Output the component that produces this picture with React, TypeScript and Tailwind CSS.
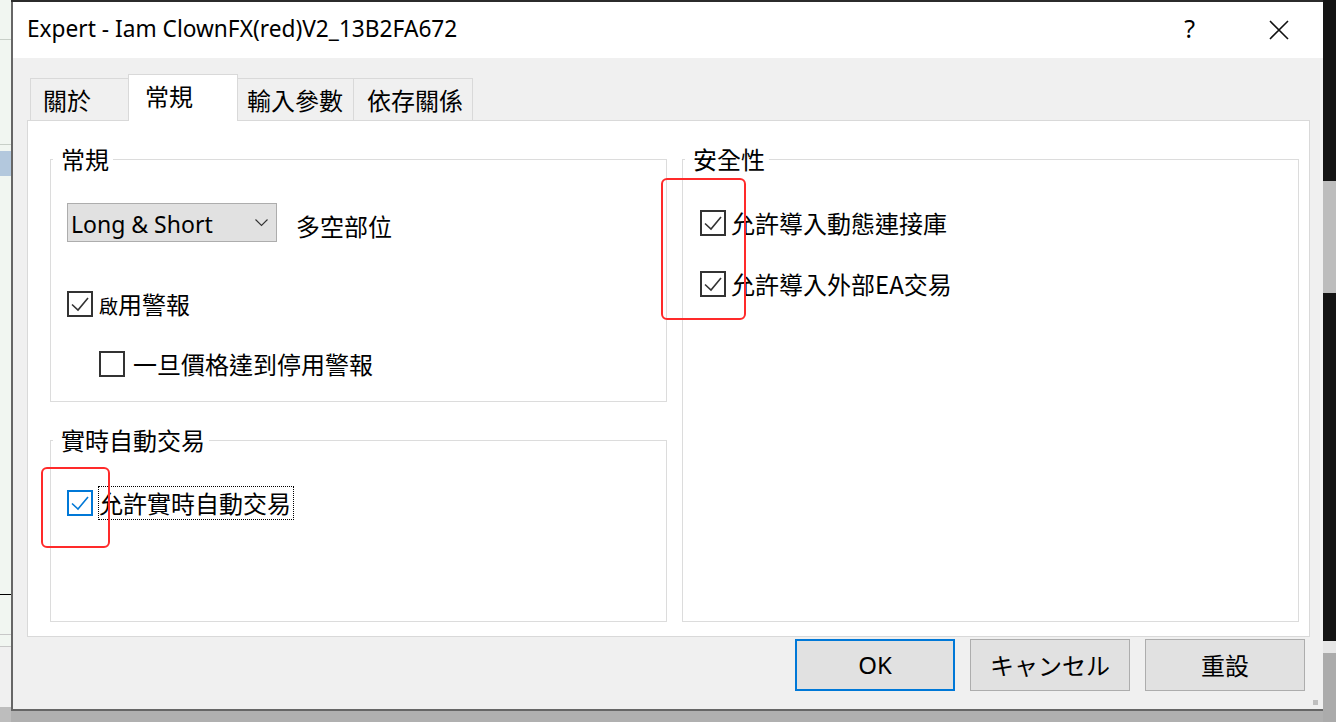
import React from "react";

const latin = { fontFamily: "'Noto Sans', 'Noto Sans CJK TC', sans-serif" };
const cjk = { fontFamily: "'Noto Sans CJK TC', sans-serif" };
const jp = { fontFamily: "'Noto Sans CJK JP', sans-serif" };

function CheckBox({ checked, focused }: { checked: boolean; focused?: boolean }) {
  const color = focused ? "#0078d7" : "#333333";
  return (
    <div
      className={
        "w-[26px] h-[26px] shrink-0 border-2 bg-white " +
        (focused ? "border-[#0078d7]" : "border-[#333333]")
      }
    >
      {checked && (
        <svg width="22" height="22" viewBox="0 0 22 22">
          <polyline
            points="3,11.5 9,17 19,5"
            fill="none"
            stroke={color}
            strokeWidth="1.6"
          />
        </svg>
      )}
    </div>
  );
}

function GroupBox({
  title,
  className,
  children
}: {
  title: string;
  className: string;
  children: React.ReactNode;
}) {
  return (
    <fieldset className={"border border-[#dcdcdc] " + className}>
      <legend
        className="ml-[2px] pl-[8px] pr-[4px] text-[24px] leading-[24px]"
        style={cjk}
      >
        {title}
      </legend>
      {children}
    </fieldset>
  );
}

function Tab({
  label,
  className,
  selected
}: {
  label: string;
  className: string;
  selected?: boolean;
}) {
  return (
    <div
      className={
        "flex items-center border border-[#d9d9d9] border-b-0 text-[24px] " +
        (selected
          ? "bg-white h-[47px] -mb-[1px] relative z-10 pb-[4px]"
          : "bg-[#f0f0f0] h-[42px]") +
        " " +
        className
      }
      style={cjk}
    >
      {label}
    </div>
  );
}

function DialogButton({
  label,
  primary,
  font
}: {
  label: string;
  primary?: boolean;
  font: React.CSSProperties;
}) {
  return (
    <div
      className={
        "w-[160px] h-[52px] flex items-center justify-center bg-[#e1e1e1] text-[24px] " +
        (primary ? "border-2 border-[#0078d7]" : "border border-[#adadad]")
      }
      style={font}
    >
      {label}
    </div>
  );
}

export default function App() {
  return (
    <div className="relative w-[1336px] h-[722px] overflow-hidden flex bg-[#b4b4b4] text-black">
      {/* background app, left side */}
      <div className="w-[11px] h-full flex flex-col bg-[#f1f6f1]">
        <div className="h-[40px] border-b border-[#c8cfc8]" />
        <div className="h-[105px] border-b border-[#c8cfc8]" />
        <div className="h-[6px]" />
        <div className="h-[25px] bg-[#b3c8dd]" />
        <div className="h-[419px] border-b border-black" />
        <div className="h-[40px] border-b border-[#c8c8c8]" />
        <div className="h-[12px] border-b border-[#c8c8c8]" />
        <div className="h-[60px] bg-[#f0f0f0]" />
        <div className="flex-1 bg-[#bdbdbd]" />
      </div>

      {/* dialog column */}
      <div className="w-[1312px] h-full flex flex-col">
        <div className="h-[2px] bg-[#2b2b2b]" />
        <div className="h-[709px] flex flex-col border-l-2 border-b-2 border-[#666666] bg-[#f0f0f0]">
          <div className="h-[56px] bg-white flex items-center pl-[14px] pr-[34px]">
            <div className="text-[22.7px] flex-1 pb-[2px]" style={latin}>
              Expert - Iam ClownFX(red)V2_13B2FA672
            </div>
            <div className="text-[25px] mr-[74px] pb-[2px]" style={latin}>
              ?
            </div>
            <svg width="20" height="20" viewBox="0 0 20 20">
              <path d="M1 1 L19 19 M19 1 L1 19" stroke="#111" strokeWidth="1.6" />
            </svg>
          </div>

          <div className="flex-1 flex flex-col pt-[16px] pl-[14px] pr-[13px] relative">
            <div className="h-[46px] flex items-end pl-[3px]">
              <Tab label="關於" className="w-[98px] pl-[12px] border-r-0" />
              <Tab label="常規" className="w-[110px] pl-[16px]" selected />
              <Tab label="輸入參數" className="w-[116px] pl-[9px] border-l-0" />
              <Tab label="依存關係" className="w-[119px] pl-[13px] border-l-0" />
            </div>

            <div className="h-[517px] bg-white border border-[#d9d9d9] flex gap-[15px] pl-[22px] pt-[26px]">
              <div className="w-[617px] flex flex-col gap-[26px]">
                <GroupBox title="常規" className="h-[255px]">
                  <div className="pl-[16px] pt-[32px] flex flex-col">
                    <div className="flex items-center h-[39px]">
                      <div className="w-[210px] h-[39px] bg-[#e1e1e1] border border-[#adadad] flex items-center pl-[3px] pr-[8px]">
                        <span className="flex-1 h-[37px] flex items-center text-[23px] pt-[3px]" style={latin}>
                          Long &amp; Short
                        </span>
                        <svg width="13" height="8" viewBox="0 0 13 8">
                          <polyline points="0.5,0.5 6.5,6.5 12.5,0.5" fill="none" stroke="#333" strokeWidth="1.1" />
                        </svg>
                      </div>
                      <span className="ml-[19px] h-[39px] flex items-center text-[24px] pt-[7px]" style={cjk}>
                        多空部位
                      </span>
                    </div>
                    <div className="mt-[49px] flex items-center gap-[6px] h-[26px]">
                      <CheckBox checked />
                      <span className="text-[24px] flex items-baseline" style={cjk}>
                        <span className="text-[19px]">啟</span>用警報
                      </span>
                    </div>
                    <div className="mt-[34px] ml-[32px] flex items-center gap-[8px] h-[26px]">
                      <CheckBox checked={false} />
                      <span className="text-[24px]" style={cjk}>
                        一旦價格達到停用警報
                      </span>
                    </div>
                  </div>
                </GroupBox>
                <GroupBox title="實時自動交易" className="h-[194px]">
                  <div className="pl-[16px] pt-[34px] flex items-center h-[68px]">
                    <CheckBox checked focused />
                    <span
                      className="ml-[5px] h-[34px] border border-dotted border-black pl-0 pr-[2px] flex items-center text-[24px]"
                      style={cjk}
                    >
                      允許實時自動交易
                    </span>
                  </div>
                </GroupBox>
              </div>

              <GroupBox title="安全性" className="w-[617px] h-[475px]">
                <div className="pl-[17px] pt-[39px] flex flex-col gap-[35px]">
                  <div className="flex items-center gap-[5px] h-[26px]">
                    <CheckBox checked />
                    <span className="text-[24px]" style={cjk}>
                      允許導入動態連接庫
                    </span>
                  </div>
                  <div className="flex items-center gap-[5px] h-[26px]">
                    <CheckBox checked />
                    <span className="text-[24px]" style={cjk}>
                      允許導入外部EA交易
                    </span>
                  </div>
                </div>
              </GroupBox>
            </div>

            <div className="mt-[2px] flex justify-end gap-[15px] pr-[5px]">
              <DialogButton label="OK" primary font={latin} />
              <DialogButton label="キャンセル" font={jp} />
              <DialogButton label="重設" font={cjk} />
            </div>

            <div className="absolute right-[5px] bottom-[4px] w-[5px] h-[5px] bg-[#bfbfbf]" />
          </div>
        </div>
        <div className="flex-1 bg-[#b0b0b0]" />
      </div>

      {/* background app, right side */}
      <div className="w-[13px] h-full flex flex-col bg-[#141414]">
        <div className="h-[181px]" />
        <div className="h-[112px] bg-[#bdbdbd]" />
        <div className="h-[348px]" />
        <div className="h-[12px] bg-[#e6e6e6]" />
        <div className="flex-1 bg-[#ababab]" />
      </div>

      {/* red annotation boxes */}
      <div className="absolute left-[41px] top-[467px] w-[69px] h-[81px] border-2 border-[#ff2a2a] rounded-[6px]" />
      <div className="absolute left-[661px] top-[178px] w-[85px] h-[142px] border-2 border-[#ff2a2a] rounded-[6px]" />
    </div>
  );
}
